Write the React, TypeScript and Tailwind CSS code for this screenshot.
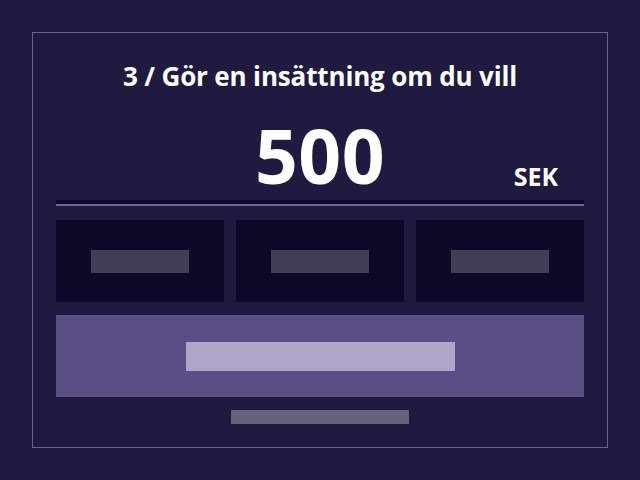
import React from "react";

const Placeholder = ({ className }: { className: string }) => (
  <div className={className} />
);

const App = () => {
  return (
    <div className="min-h-screen w-full bg-[#201a41] p-8 font-['Open_Sans',sans-serif]">
      <div className="flex h-[416px] flex-col border border-[#6a6489] px-[23px] pb-[22px] pt-[26px]">
        <h1 className="text-center text-[26px] font-bold leading-[34px] tracking-[-0.15px] text-white">
          3 / Gör en insättning om du vill
        </h1>

        <div className="mt-[24px] grid grid-cols-[1fr_auto_1fr] items-end">
          <div />
          <span className="text-[75px] font-bold leading-[76px] tracking-[0.5px] text-white">
            500
          </span>
          <span className="justify-self-end pb-[4px] pr-[26px] text-[25px] font-bold leading-none text-white">
            SEK
          </span>
        </div>

        <div className="mt-[7px] h-1 bg-[#0e0928]" />
        <div className="h-0.5 bg-[#6d629a]" />

        <div className="mt-[14px] grid grid-cols-3 gap-3">
          {[0, 1, 2].map((i) => (
            <div
              key={i}
              className="flex h-[82px] items-center justify-center bg-[#0e0828]"
            >
              <Placeholder className="h-[23px] w-[98px] bg-[#433d55]" />
            </div>
          ))}
        </div>

        <button className="mt-[13px] flex h-[82px] items-center justify-center bg-[#5b4d85]">
          <Placeholder className="h-[29px] w-[269px] bg-[#aea5c8]" />
        </button>

        <div className="mt-[13px] flex justify-center">
          <Placeholder className="h-[14px] w-[178px] bg-[#676179]" />
        </div>
      </div>
    </div>
  );
};

export default App;
